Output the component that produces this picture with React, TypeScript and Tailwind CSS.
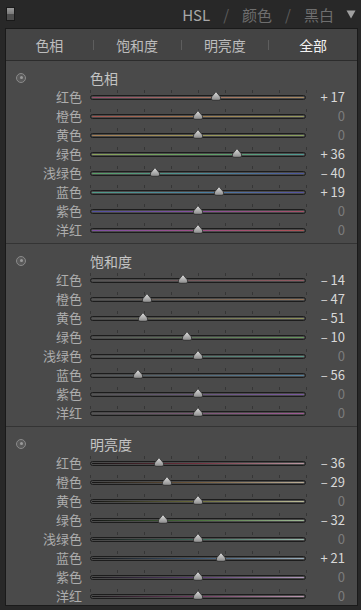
import React from 'react';

type Row = { label: string; value: number; track: string };
type Section = { title: string; rows: Row[] };

const sections: Section[] = [
    {
        title: '色相',
        rows: [
            { label: '红色', value: 17, track: 'bg-[linear-gradient(to_right,#9a4d6a,#a6705f,#a88a62)]' },
            { label: '橙色', value: 0, track: 'bg-[linear-gradient(to_right,#a2544f,#a27e52,#969a5e)]' },
            { label: '黄色', value: 0, track: 'bg-[linear-gradient(to_right,#a67e54,#9c9658,#88a05c)]' },
            { label: '绿色', value: 36, track: 'bg-[linear-gradient(to_right,#8ca45a,#62a262,#4e9a94)]' },
            { label: '浅绿色', value: -40, track: 'bg-[linear-gradient(to_right,#58a066,#4b8e98,#4c559c)]' },
            { label: '蓝色', value: 19, track: 'bg-[linear-gradient(to_right,#4f9c88,#4a80a0,#5552a0)]' },
            { label: '紫色', value: 0, track: 'bg-[linear-gradient(to_right,#5050a0,#88509e,#a85066)]' },
            { label: '洋红', value: 0, track: 'bg-[linear-gradient(to_right,#7e50a4,#a05088,#ac5252)]' },
        ],
    },
    {
        title: '饱和度',
        rows: [
            { label: '红色', value: -14, track: 'bg-[linear-gradient(to_right,#555555,#945a62)]' },
            { label: '橙色', value: -47, track: 'bg-[linear-gradient(to_right,#555555,#967458)]' },
            { label: '黄色', value: -51, track: 'bg-[linear-gradient(to_right,#555555,#8e925a)]' },
            { label: '绿色', value: -10, track: 'bg-[linear-gradient(to_right,#555555,#66985c)]' },
            { label: '浅绿色', value: 0, track: 'bg-[linear-gradient(to_right,#555555,#569888)]' },
            { label: '蓝色', value: -56, track: 'bg-[linear-gradient(to_right,#555555,#52809e)]' },
            { label: '紫色', value: 0, track: 'bg-[linear-gradient(to_right,#555555,#7a58a0)]' },
            { label: '洋红', value: 0, track: 'bg-[linear-gradient(to_right,#555555,#a05894)]' },
        ],
    },
    {
        title: '明亮度',
        rows: [
            { label: '红色', value: -36, track: 'bg-[linear-gradient(to_right,#151515,#72303e,#bc98a2)]' },
            { label: '橙色', value: -29, track: 'bg-[linear-gradient(to_right,#151515,#725a3c,#bcae96)]' },
            { label: '黄色', value: 0, track: 'bg-[linear-gradient(to_right,#151515,#6e6e3c,#bcbc98)]' },
            { label: '绿色', value: -32, track: 'bg-[linear-gradient(to_right,#151515,#4a723c,#a2bc98)]' },
            { label: '浅绿色', value: 0, track: 'bg-[linear-gradient(to_right,#151515,#3c6a5a,#98bcae)]' },
            { label: '蓝色', value: 21, track: 'bg-[linear-gradient(to_right,#151515,#3c5672,#98adbc)]' },
            { label: '紫色', value: 0, track: 'bg-[linear-gradient(to_right,#151515,#5a3c72,#b098bc)]' },
            { label: '洋红', value: 0, track: 'bg-[linear-gradient(to_right,#151515,#723c62,#bc98b0)]' },
        ],
    },
];

const ticks = [0, 1, 2, 3, 4, 5, 6, 7, 8];

function formatValue(v: number) {
    if (v > 0) return `+ ${v}`;
    if (v < 0) return `– ${Math.abs(v)}`;
    return '0';
}

function Thumb({ value }: { value: number }) {
    // track is 216px wide, centre at 108
    const left = 108 + (value / 100) * 108;
    return (
        <svg
            className="absolute top-[4px]"
            style={{ left: left - 6 }}
            width="12"
            height="10"
            viewBox="0 0 12 10"
        >
            <defs>
                <linearGradient id="thumbFill" x1="0" y1="0" x2="0" y2="1">
                    <stop offset="0" stopColor="#e0e0e0" />
                    <stop offset="1" stopColor="#8a8a8a" />
                </linearGradient>
            </defs>
            <path
                d="M6 0.6 L10.3 5.8 Q11.4 9.3 8.2 9.3 L3.8 9.3 Q0.6 9.3 1.7 5.8 Z"
                fill="url(#thumbFill)"
                stroke="#2a2a2a"
                strokeWidth="0.8"
            />
        </svg>
    );
}

function SliderRow({ row }: { row: Row }) {
    return (
        <div className="flex h-[19px] items-center">
            <div className="w-[76px] text-right text-[13px] leading-none text-[#adadad]">
                {row.label}
            </div>
            <div className="relative ml-[8px] h-[19px] w-[216px]">
                {/* Ticks */}
                {ticks.map((t) => (
                    <div
                        key={t}
                        className="absolute top-[3px] h-[3px] w-px bg-[#363636]"
                        style={{ left: t * 27 }}
                    />
                ))}
                {/* Track */}
                <div className="absolute top-[8px] h-[5px] w-full rounded-full border border-[#1c1c1c] p-px">
                    <div className={`h-full w-full rounded-full ${row.track}`} />
                </div>
                <Thumb value={row.value} />
            </div>
            <div
                className={`w-[39px] text-right text-[13px] leading-none ${
                    row.value === 0 ? 'text-[#7c7c7c]' : 'text-[#d8d8d8]'
                }`}
            >
                {formatValue(row.value)}
            </div>
        </div>
    );
}

function SectionBlock({ section, last }: { section: Section; last: boolean }) {
    return (
        <div className={`pt-[7px] ${last ? 'pb-0' : 'pb-[4px] border-b border-[#343434]'}`}>
            <div className="flex h-[19px] items-center">
                <div className="ml-[10px] flex h-[10px] w-[10px] items-center justify-center rounded-full border border-[#8a8a8a] bg-[#5a5a5a]">
                    <div className="h-[3px] w-[3px] rounded-full bg-[#9a9a9a]" />
                </div>
                <div className="ml-[64px] text-[14px] leading-none text-[#c4c4c4]">
                    {section.title}
                </div>
            </div>
            {section.rows.map((row) => (
                <SliderRow key={row.label} row={row} />
            ))}
        </div>
    );
}

export default function App() {
    const tabs = ['色相', '饱和度', '明亮度', '全部'];

    return (
        <div
            className="h-[610px] w-[361px] overflow-hidden bg-[#282828]"
            style={{ fontFamily: '"Noto Sans CJK SC", "Liberation Sans", sans-serif' }}
        >
            {/* Header */}
            <div className="flex h-[28px] items-center pl-[6px] pr-[5px]">
                <div className="flex h-[14px] w-[9px] flex-col border border-[#1a1a1a]">
                    <div className="h-1/2 bg-[linear-gradient(to_bottom,#9a9a9a,#7a7a7a)]" />
                    <div className="h-1/2 bg-[#4e4e4e]" />
                </div>
                <div className="ml-auto flex items-center text-[15px] leading-none">
                    <span className="text-[#a8a8a8]">HSL</span>
                    <span className="mx-[13px] text-[#5c5c5c]">/</span>
                    <span className="text-[#6e6e6e]">颜色</span>
                    <span className="mx-[13px] text-[#5c5c5c]">/</span>
                    <span className="text-[#6e6e6e]">黑白</span>
                    <svg className="ml-[12px]" width="10" height="9" viewBox="0 0 10 9">
                        <path d="M0.5 0.5 L9.5 0.5 L5 8.5 Z" fill="#a0a0a0" />
                    </svg>
                </div>
            </div>

            {/* Panel */}
            <div className="ml-[5px] mr-[3px] border border-[#1a1a1a] bg-[#4a4a4a]">
                {/* Tabs */}
                <div className="flex h-[32px] items-center border-b border-[#2c2c2c] bg-[#444444]">
                    {tabs.map((tab, i) => (
                        <div key={tab} className="flex flex-1 items-center">
                            <div
                                className={`flex-1 text-center text-[14px] leading-none ${
                                    i === 3 ? 'text-[#f2f2f2]' : 'text-[#bdbdbd]'
                                }`}
                            >
                                {tab}
                            </div>
                            {i < 3 && <div className="h-[10px] w-px bg-[#5e5e5e]" />}
                        </div>
                    ))}
                </div>

                {sections.map((s, i) => (
                    <SectionBlock key={s.title} section={s} last={i === sections.length - 1} />
                ))}
            </div>
        </div>
    );
}
